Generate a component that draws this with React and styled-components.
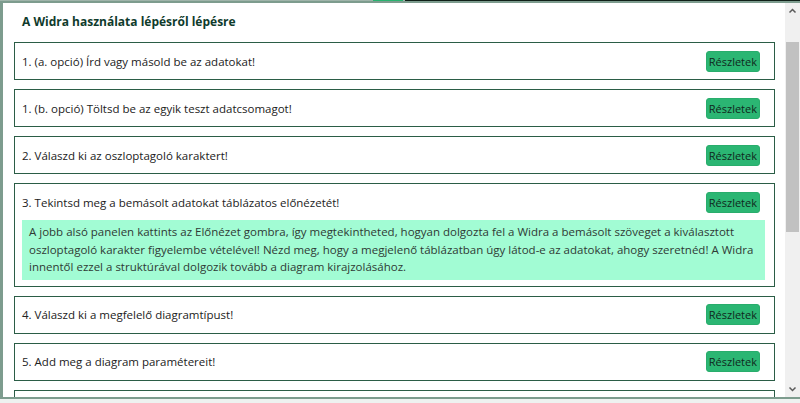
import React from "react";
import styled, { createGlobalStyle } from "styled-components";

const GlobalStyle = createGlobalStyle`
    html, body {
        margin: 0;
        padding: 0;
        height: 100%;
        overflow: hidden;
    }
    body {
        background: #eef2f0;
        font-family: "Open Sans", "Noto Sans", sans-serif;
    }
`;

const steps = [
    { title: "1. (a. opció) Írd vagy másold be az adatokat!" },
    { title: "1. (b. opció) Töltsd be az egyik teszt adatcsomagot!" },
    { title: "2. Válaszd ki az oszloptagoló karaktert!" },
    {
        title: "3. Tekintsd meg a bemásolt adatokat táblázatos előnézetét!",
        open: true,
        details:
            "A jobb alsó panelen kattints az Előnézet gombra, így megtekintheted, hogyan dolgozta fel a Widra a bemásolt szöveget a kiválasztott oszloptagoló karakter figyelembe vételével! Nézd meg, hogy a megjelenő táblázatban úgy látod-e az adatokat, ahogy szeretnéd! A Widra innentől ezzel a struktúrával dolgozik tovább a diagram kirajzolásához.",
    },
    { title: "4. Válaszd ki a megfelelő diagramtípust!" },
    { title: "5. Add meg a diagram paramétereit!" },
    { title: "6. Rajzold ki a diagramot!" },
];

const Chevron = ({ down }) => (
    <svg width="15" height="17" viewBox="0 0 15 17">
        <path
            d={down ? "M4.5 7.5 L7.5 10.5 L10.5 7.5" : "M4.5 9.5 L7.5 6.5 L10.5 9.5"}
            fill="none"
            stroke="#5a5a5a"
            strokeWidth="1.5"
        />
    </svg>
);

const App = function () {
    return (
        <>
            <GlobalStyle />
            <PageBehind>
                <TopBar>
                    <span className="tab" />
                    <span className="tab active" />
                    <span className="dark" />
                </TopBar>
            </PageBehind>
            <Modal>
                <ModalBody>
                    <ModalTitle>A Widra használata lépésről lépésre</ModalTitle>
                    <StepList>
                        {steps.map((step) => (
                            <StepCard key={step.title}>
                                <StepHead>
                                    <span>{step.title}</span>
                                    <DetailsButton>Részletek</DetailsButton>
                                </StepHead>
                                {step.open && <StepDetails>{step.details}</StepDetails>}
                            </StepCard>
                        ))}
                    </StepList>
                </ModalBody>
                <ScrollTrack>
                    <ScrollButton><Chevron /></ScrollButton>
                    <ScrollRail>
                        <ScrollThumb $offset={22} $size={190} />
                    </ScrollRail>
                    <ScrollButton><Chevron down /></ScrollButton>
                </ScrollTrack>
            </Modal>
        </>
    );
};

export default App;

const PageBehind = styled.div`
    height: 403px;
    background: #eef2f0;
`;

const TopBar = styled.div`
    height: 2px;
    display: flex;
    background: #9fb4aa;

    .tab {
        width: 30px;
        margin-left: 340px;
    }

    .tab.active {
        margin-left: 3px;
        background: #27b36f;
    }

    .dark {
        flex: 1;
        margin-left: 2px;
        background: #0f1f17;
    }
`;

const Modal = styled.div`
    position: fixed;
    top: 1px;
    left: 0;
    right: 0;
    height: 398px;
    box-sizing: border-box;
    border: 2px solid #7d9c8e;
    border-left-width: 3px;
    border-right: none;
    background: #fff;
    display: flex;
`;

const ModalBody = styled.div`
    flex: 1;
    overflow: hidden;
    padding: 0 10px 0 11px;
`;

const ModalTitle = styled.h2`
    margin: 0;
    padding: 10px 0 0 8px;
    height: 30px;
    box-sizing: border-box;
    font-size: 12px;
    line-height: 17px;
    font-weight: 700;
    color: #0f3b2c;
`;

const StepList = styled.div`
    display: flex;
    flex-direction: column;
    gap: 9px;
    padding-top: 9px;
`;

const StepCard = styled.div`
    border: 1px solid #2b5d46;
    padding: 0 14px 0 7px;
`;

const StepHead = styled.div`
    height: 36px;
    display: flex;
    align-items: center;
    justify-content: space-between;
    font-size: 11.5px;
    color: #222;
`;

const DetailsButton = styled.button`
    font-family: inherit;
    font-size: 11px;
    color: #10281d;
    background: #2bb673;
    border: 1px solid #29ad6c;
    border-radius: 3px;
    height: 21px;
    padding: 0 2px;
    cursor: pointer;
`;

const StepDetails = styled.div`
    background: #a2fcd4;
    color: #2f3a34;
    font-size: 11.5px;
    line-height: 17.5px;
    padding: 3px 6px 4px 7px;
    margin: 0 -5px 6px 0;
`;

const ScrollTrack = styled.div`
    width: 15px;
    flex-shrink: 0;
    background: #f0f0f0;
    display: flex;
    flex-direction: column;
`;

const ScrollButton = styled.div`
    height: 17px;
    display: flex;
    align-items: center;
    justify-content: center;
`;

const ScrollRail = styled.div`
    flex: 1;
    padding: 0 1px;
`;

const ScrollThumb = styled.div`
    margin-top: ${(p) => p.$offset}px;
    height: ${(p) => p.$size}px;
    background: #c1c1c1;
`;
